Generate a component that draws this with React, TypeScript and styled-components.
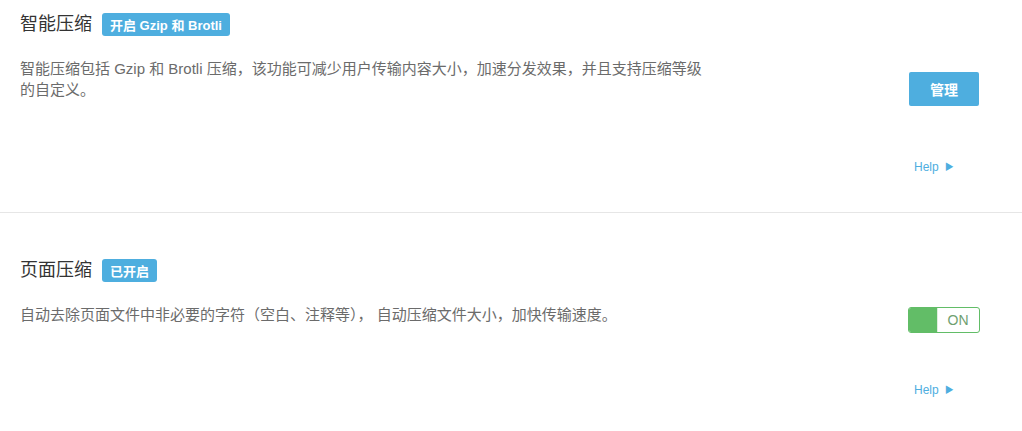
import React from "react";
import styled, { createGlobalStyle } from "styled-components";

const GlobalStyle = createGlobalStyle`
  html, body {
    margin: 0;
    padding: 0;
    background: #ffffff;
  }
  body {
    font-family: "Liberation Sans", "Noto Sans CJK SC", sans-serif;
    color: #333333;
  }
`;

const Page = styled.div`
  width: 1022px;
  display: flex;
  flex-direction: column;
`;

const Section = styled.section<{ $top: number; $height: number; $divider?: boolean }>`
  box-sizing: border-box;
  height: ${(p) => p.$height}px;
  padding: ${(p) => p.$top}px 42px 0 20px;
  display: flex;
  justify-content: space-between;
  border-bottom: ${(p) => (p.$divider ? "1px solid #e6e6e6" : "none")};
`;

const Main = styled.div`
  display: flex;
  flex-direction: column;
`;

const Header = styled.div`
  height: 23px;
  display: flex;
  align-items: center;
  gap: 10px;
`;

const Title = styled.h2`
  margin: 0;
  font-size: 18px;
  font-weight: normal;
  color: #333333;
  line-height: 23px;
`;

const Badge = styled.span`
  display: inline-flex;
  align-items: center;
  height: 23px;
  padding: 0 8px;
  border-radius: 3px;
  background: #4eaedf;
  color: #ffffff;
  font-size: 13px;
  font-weight: bold;
`;

const Desc = styled.p`
  margin: 22px 0 0;
  width: 686px;
  font-size: 15px;
  line-height: 21px;
  color: #6b6b6b;
`;

const Side = styled.div<{ $top: number; $helpGap: number }>`
  width: 72px;
  display: flex;
  flex-direction: column;
  align-items: center;
  padding-top: ${(p) => p.$top}px;

  & > a {
    margin-top: ${(p) => p.$helpGap}px;
  }
`;

const ManageButton = styled.button`
  width: 70px;
  height: 34px;
  border: none;
  border-radius: 2px;
  background: #4eaedf;
  color: #ffffff;
  font-family: "Noto Sans CJK SC", sans-serif;
  font-size: 14px;
  font-weight: bold;
  cursor: pointer;
  padding: 0;
`;

const Toggle = styled.div`
  box-sizing: border-box;
  width: 72px;
  height: 26px;
  display: flex;
  border: 1px solid #62bd67;
  border-radius: 3px;
  overflow: hidden;
`;

const ToggleKnob = styled.span`
  width: 28px;
  background: #62bd67;
`;

const ToggleLabel = styled.span`
  flex: 1;
  display: flex;
  align-items: center;
  justify-content: center;
  font-size: 14px;
  color: #6f9f71;
  box-shadow: inset 1px 0 0 #dfeede;
`;

const Help = styled.a`
  align-self: stretch;
  display: flex;
  align-items: center;
  gap: 6px;
  padding-left: 6px;
  font-size: 12px;
  line-height: 16px;
  color: #4eaedf;
  text-decoration: none;
`;

const Arrow = styled.span`
  font-size: 9px;
`;

export default function App() {
  return (
    <Page>
      <GlobalStyle />
      <Section $top={13} $height={213} $divider>
        <Main>
          <Header>
            <Title>智能压缩</Title>
            <Badge>开启 Gzip 和 Brotli</Badge>
          </Header>
          <Desc>
            智能压缩包括 Gzip 和 Brotli 压缩，该功能可减少用户传输内容大小，加速分发效果，并且支持压缩等级的自定义。
          </Desc>
        </Main>
        <Side $top={59} $helpGap={53}>
          <ManageButton>管理</ManageButton>
          <Help href="#">
            Help <Arrow>▶</Arrow>
          </Help>
        </Side>
      </Section>
      <Section $top={46} $height={218}>
        <Main>
          <Header>
            <Title>页面压缩</Title>
            <Badge>已开启</Badge>
          </Header>
          <Desc>自动去除页面文件中非必要的字符（空白、注释等）， 自动压缩文件大小，加快传输速度。</Desc>
        </Main>
        <Side $top={48} $helpGap={49}>
          <Toggle>
            <ToggleKnob />
            <ToggleLabel>ON</ToggleLabel>
          </Toggle>
          <Help href="#">
            Help <Arrow>▶</Arrow>
          </Help>
        </Side>
      </Section>
    </Page>
  );
}
